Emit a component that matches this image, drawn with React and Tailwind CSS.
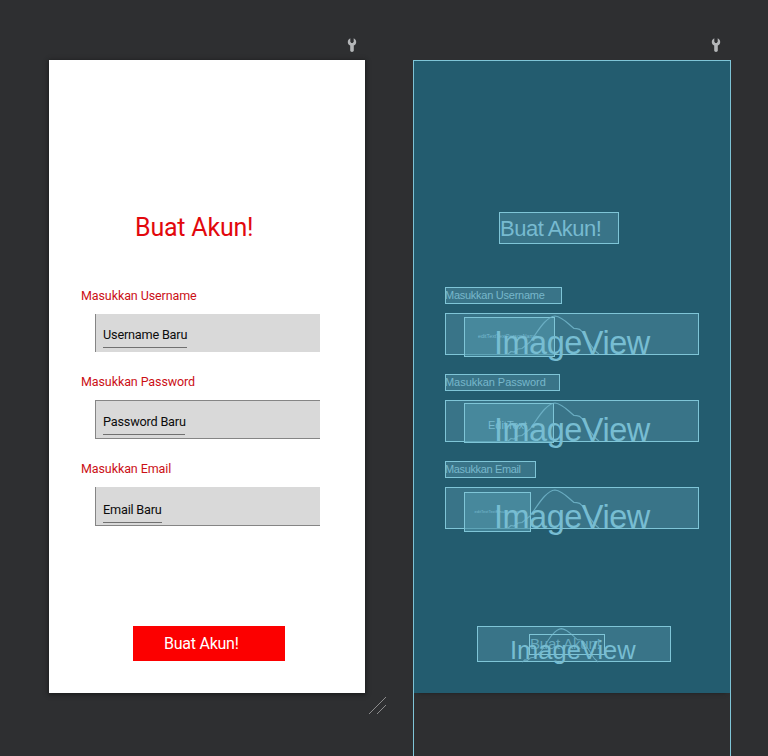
import React from "react";

const roboto = "font-['Roboto',sans-serif] whitespace-nowrap";
const arial = "font-['Liberation_Sans',sans-serif] whitespace-nowrap";

function Wrench() {
  return (
    <svg width="10" height="16" viewBox="0 0 10 16" className="block">
      <path d="M3.300 1.200v3.600l1 1.200h1.400l1-1.200V1.200C8.200 1.900 9.200 3.300 9.200 5c0 1.600-.9 2.900-2.400 3.600v5c0 .8-.8 1.400-1.800 1.400s-1.800-.6-1.800-1.400v-5C1.700 7.900.8 6.600.8 5c0-1.700 1-3.100 2.500-3.800z" fill="#b4b6b8" />
    </svg>
  );
}

function Mountain({ className, width, height }) {
  return (
    <svg className={className} width={width} height={height} viewBox="0 0 96 42" fill="none" preserveAspectRatio="none">
      <path d="M4 41l3-2.500 3 .5 4-3 4-.5L26 29C33 20 41 4 51 3c8 1 13 8 19 12.500 4 .5 5-1 8 3L85 29c3 5 4 8 10 12" stroke="#71b5ca" strokeWidth="1.200" opacity=".85" />
    </svg>
  );
}

function Label({ children, className }) {
  return <div className={`${roboto} h-[17px] text-[12.500px] leading-[18px] tracking-[-0.100px] text-[#cb1016] ${className}`}>{children}</div>;
}

function Field({ children, className, inputClass }) {
  return (
    <div className={`ml-[14px] w-[225px] border-l border-[#858585] bg-[#d9d9d9] pl-[7px] ${className}`}>
      <div className={`${roboto} border-b border-[#707070] text-[12.700px] leading-[16px] tracking-[-0.200px] text-[#0c0c0c] ${inputClass}`}>{children}</div>
    </div>
  );
}

function BlueLabel({ children, className }) {
  return (
    <div className={`${arial} h-[17px] border border-[#7fc5d7] bg-[#397488] text-[11px] leading-[15px] text-[#77b7cb] ${className}`}>
      <span className="-ml-px">{children}</span>
    </div>
  );
}

function BlueField({ children, className, inputClass }) {
  return (
    <div className={`relative h-[42px] w-[254px] border border-[#7fc5d7] bg-[#397488] ${className}`}>
      <div className={`${arial} absolute left-[18px] flex h-[40px] items-center justify-center border border-[#7fc5d7] bg-[#4e93a8]/65 text-[#77bad0] ${inputClass}`}>{children}</div>
      <Mountain className="absolute left-[58px] top-[-1px]" width="96" height="42" />
      <div className={`${arial} absolute left-[48px] top-[11px] text-[32.500px] leading-[37px] tracking-[-0.500px] text-[#77bdd2]`}>ImageView</div>
    </div>
  );
}

export default function App() {
  return (
    <main className="flex h-[756px] w-[768px] gap-[48px] overflow-hidden bg-[#2e2f31] pl-[49px]">
      <section className="flex w-[316px] shrink-0 flex-col">
        <div className="flex h-[60px] justify-end pr-[8px] pt-[37px]"><Wrench /></div>
        <div className="flex h-[633px] flex-col bg-white pl-[32px] pt-[152px] shadow-[0_1px_4px_1px_#1d1e1f]">
          <h1 className={`${roboto} ml-[54px] h-[32px] w-[120px] text-[25px] leading-[31px] tracking-[-0.200px] text-[#e2080d]`}>Buat Akun!</h1>
          <Label className="mt-[43px]">Masukkan Username</Label>
          <Field className="mt-[10px] h-[38px] pt-[13px]" inputClass="h-[21px] w-[84px]">Username Baru</Field>
          <Label className="mt-[21px]">Masukkan Password</Label>
          <Field className="mt-[10px] h-[39px] border-y pt-[13px]" inputClass="h-[21px] w-[82px]">Password Baru</Field>
          <Label className="mt-[21px]">Masukkan Email</Label>
          <Field className="mt-[10px] h-[39px] border-b pt-[15px]" inputClass="h-[21px] w-[59px]">Email Baru</Field>
          <div className={`${roboto} ml-[52px] mt-[100px] h-[35px] w-[152px] bg-[#fc0000] pl-[31px] text-[16px] leading-[35px] tracking-[-0.250px] text-white`}>Buat Akun!</div>
        </div>
        <svg className="ml-[319px] mt-[4px] block shrink-0" width="19" height="18" viewBox="0 0 19 18">
          <path d="M1 17L18 0M9 17l9-9" stroke="#a5a5a5" strokeWidth=".8" />
        </svg>
      </section>

      <section className="flex w-[318px] shrink-0 flex-col">
        <div className="flex h-[60px] justify-end pr-[10px] pt-[37px]"><Wrench /></div>
        <div className="h-[696px] border-x border-t border-[#7fc5d7]">
          <div className="flex h-[632px] w-[316px] flex-col bg-[#235c6f] pl-[31px] pt-[151px] shadow-[0_4px_4px_-4px_#1d1e1f]">
            <div className={`${arial} ml-[54px] h-[32px] w-[120px] border border-[#7fc5d7] bg-[#397488] text-[22px] leading-[31px] tracking-[-0.500px] text-[#77bad0]`}>Buat Akun!</div>
            <BlueLabel className="mt-[43px] w-[117px] tracking-[-0.260px]">Masukkan Username</BlueLabel>
            <BlueField className="mt-[9px]" inputClass="top-[3px] w-[91px] pr-[4px] text-[5.300px]">editTextTextPersonName</BlueField>
            <BlueLabel className="mt-[19px] w-[115px] tracking-[-0.040px]">Masukkan Password</BlueLabel>
            <BlueField className="mt-[9px]" inputClass="top-[2px] w-[90px] pt-[4px] pr-[3px] text-[11px]">EditText</BlueField>
            <BlueLabel className="mt-[19px] w-[91px] tracking-[-0.360px]">Masukkan Email</BlueLabel>
            <BlueField className="mt-[9px]" inputClass="top-[4px] w-[67px] text-[4px]">editTextTextEmailAddress</BlueField>
            <div className="relative ml-[32px] mt-[97px] h-[36px] w-[194px] border border-[#7fc5d7] bg-[#397488]">
              <Mountain className="absolute left-[41px] top-[-1px]" width="80" height="37" />
              <div className={`${arial} absolute left-[51px] top-[7px] h-[21px] w-[76px] border border-[#7fc5d7] text-[15px] leading-[18px] tracking-[-0.200px] text-[#68aabf]`}>Buat Akun!</div>
              <div className={`${arial} absolute left-[32px] top-[8px] text-[25.500px] leading-[30px] text-[#77bdd2]`}>ImageView</div>
            </div>
          </div>
        </div>
      </section>
    </main>
  );
}
